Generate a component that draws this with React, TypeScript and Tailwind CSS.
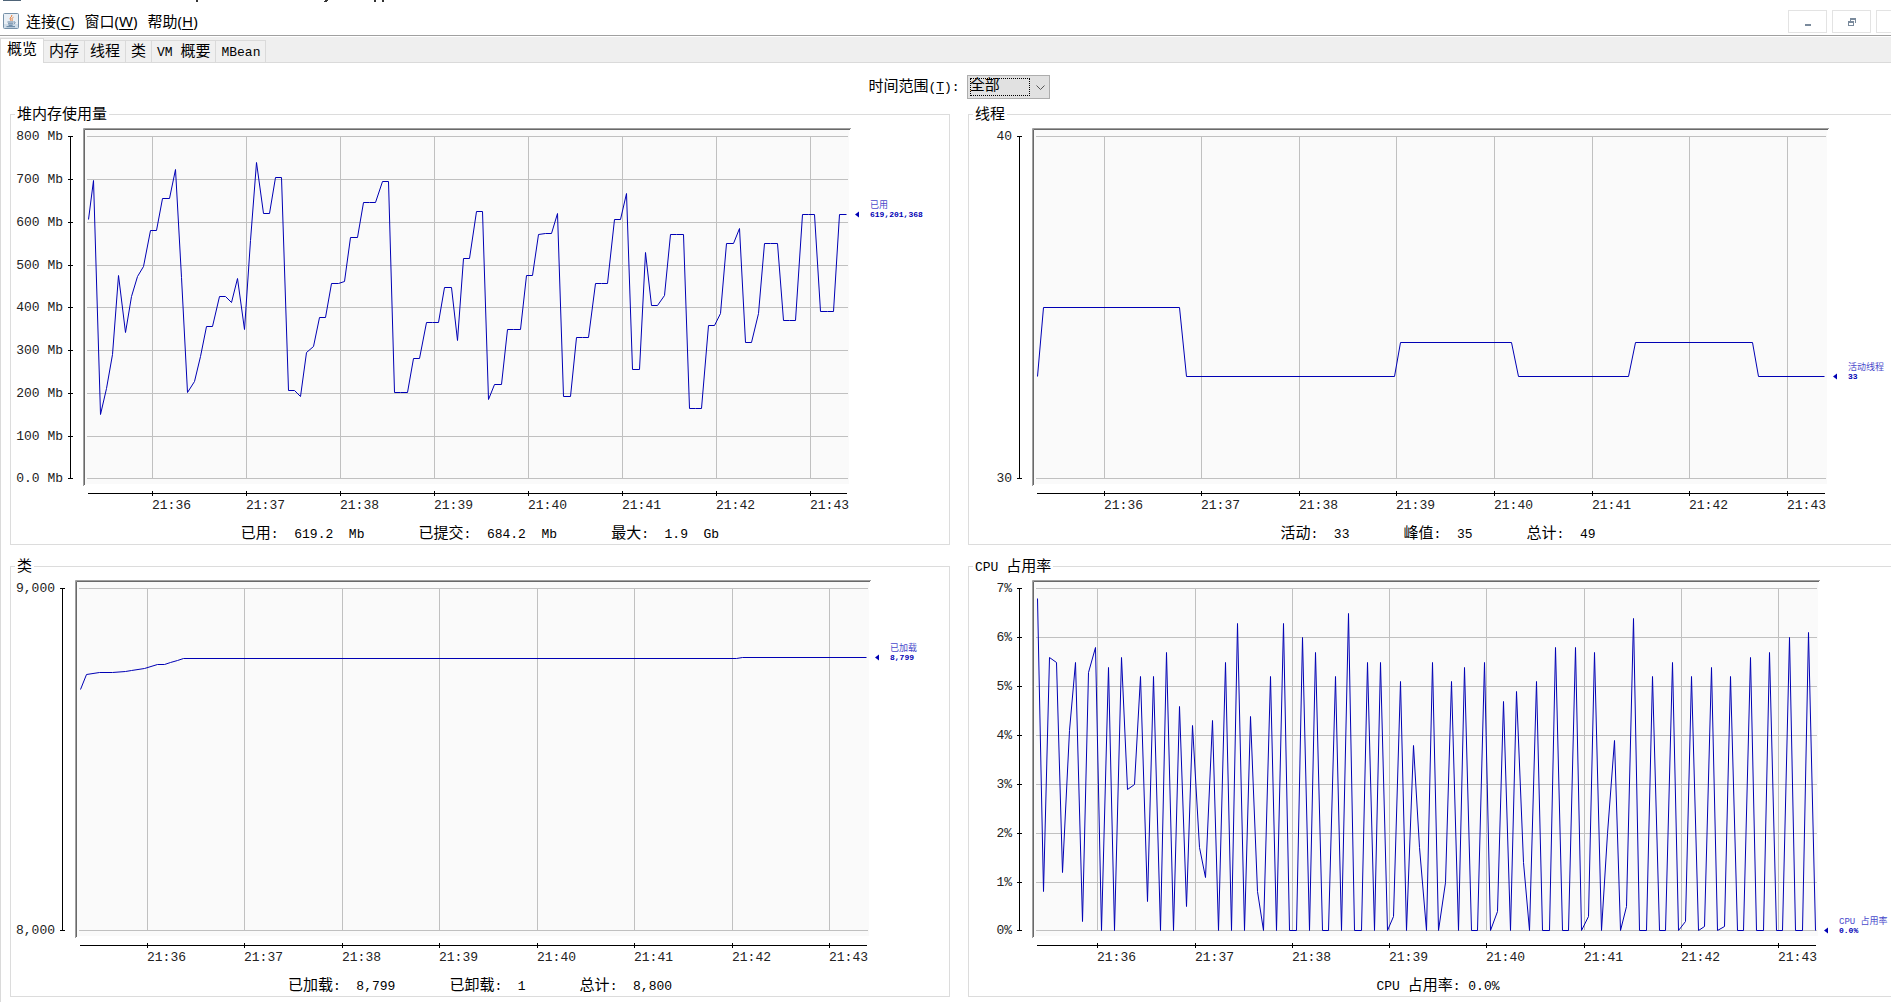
import { useLayoutEffect, useRef, useState } from "react";

type Point = [number, number];

type ChartProps = {
  min: number;
  max: number;
  ticks: { value: number; label: string }[];
  points: Point[];
  left: number;
  right: number;
  firstSample: number;
  firstMinute: number;
  duration: number;
  name: string;
  current: string;
};

const times = ["21:36", "21:37", "21:38", "21:39", "21:40", "21:41", "21:42", "21:43"];

const heap = [
  607, 699, 150, 211, 291, 475, 343, 428, 473, 496, 582, 582, 657, 657, 723, 472, 203, 227, 287, 356, 356,
  426, 426, 412, 470, 350, 557, 741, 622, 622, 706, 706, 206, 206, 194, 297, 309, 377, 377, 458, 458, 461,
  564, 564, 646, 646, 646, 695, 695, 203, 203, 203, 283, 283, 365, 365, 367, 447, 449, 325, 515, 515, 625,
  625, 187, 222, 222, 349, 349, 349, 475, 475, 573, 575, 575, 620, 194, 194, 332, 332, 332, 458, 458, 458,
  608, 608, 669, 255, 255, 529, 407, 407, 430, 573, 573, 573, 164, 165, 166, 360, 360, 388, 552, 552, 587,
  320, 320, 388, 552, 552, 552, 370, 370, 370, 618, 618, 618, 391, 391, 391, 618, 618,
];

const cpu = [
  6.8, 0.8, 5.6, 5.5, 1.2, 4.1, 5.5, 0.2, 5.3, 5.8, 0, 5.4, 0, 5.6, 2.9, 3, 5.2, 0.6, 5.2, 0, 5.7, 0, 4.6,
  0.5, 4.2, 1.7, 1.1, 4.3, 0, 5.5, 0, 6.3, 0, 4.4, 0.8, 0, 5.2, 0, 6.3, 0, 0, 6, 0, 5.7, 0, 0, 5.2, 0, 6.5,
  0, 0, 5.5, 0, 5.5, 0, 0.3, 5.1, 0, 3.8, 1.7, 0, 5.5, 0, 1, 5.1, 0, 5.4, 0, 0, 5.5, 0, 0.4, 4.7, 0, 4.9,
  1.4, 0, 5.1, 0, 0, 5.8, 0, 0, 5.8, 0, 0.3, 5.7, 0, 2, 3.9, 0, 0.5, 6.4, 0, 0, 5.2, 0, 0, 5.5, 0, 0.2,
  5.2, 0, 0.1, 5.4, 0, 0.1, 5.2, 0, 0, 5.6, 0, 0, 5.7, 0, 0, 6, 0, 0, 6.1, 0,
];

const threads: Point[] = [
  [0, 33], [1, 35], [22, 35], [23, 33], [55, 33], [56, 34], [73, 34],
  [74, 33], [91, 33], [92, 34], [110, 34], [111, 33], [121, 33],
];

const classes: Point[] = [
  [0, 8705], [1, 8751], [3, 8757], [5, 8757], [7, 8760], [8, 8762], [10, 8768], [12, 8778],
  [13, 8778], [14, 8786], [15, 8792], [16, 8796], [101, 8796], [102, 8799], [121, 8799],
];

const indexed = (values: number[]): Point[] => values.map((v, i) => [i, v]);

// ASCII runs use the narrower monospace size
const Text = ({ children }: { children: string }) => (
  <span className="whitespace-pre">
    {children.split(/([\x20-\x7e]+)/).map((part, i) =>
      i % 2 ? (
        <span key={i} className="text-[13px]">
          {part}
        </span>
      ) : (
        part
      )
    )}
  </span>
);

const TOP = 11;
const PLOT = 342;

const Chart = (p: ChartProps) => {
  const ref = useRef<HTMLDivElement>(null);
  const [width, setWidth] = useState(938);

  useLayoutEffect(() => {
    const el = ref.current;
    if (!el) return;
    const update = () => setWidth(el.clientWidth);
    update();
    const observer = new ResizeObserver(update);
    observer.observe(el);
    return () => observer.disconnect();
  }, []);

  const start = p.left + 5;
  const end = width - p.right;
  const axis = p.left - 13;
  const bottom = TOP + PLOT;
  const x = (sec: number) => Math.floor(start + ((end - start) * sec) / p.duration);
  const y = (v: number) => Math.ceil(bottom - (PLOT * (v - p.min)) / (p.max - p.min));
  const sec = (i: number) => (i === 0 ? 0 : p.firstSample + 4 * (i - 1));
  const line = p.points.map(([i, v]) => `${x(sec(i)) + 0.5},${y(v) + 0.5}`).join(" ");
  const lastY = y(p.points[p.points.length - 1][1]);

  return (
    <div ref={ref} className="h-[399px] w-full overflow-hidden">
      <svg width={width} height="399" className="block" role="img" aria-label={p.name}>
        <rect x={p.left + 2} y="5" width={end - p.left + 1} height="354" fill="#fafafa" />
        <path d={`M${p.left + 0.5} 361V3.5H${end + 5}`} fill="none" stroke="#a0a0a0" />
        <path d={`M${p.left + 1.5} 360V4.5H${end + 4}`} fill="none" stroke="#696969" />

        <g shapeRendering="crispEdges">
          {p.ticks.map((t) => (
            <g key={t.label}>
              <rect x={p.left + 4} y={y(t.value)} width={end - p.left - 2} height="1" fill="#c0c0c0" />
              <rect x={axis - 2} y={y(t.value)} width="5" height="1" />
            </g>
          ))}
          {times.map((t, i) => (
            <g key={t}>
              <rect x={x(p.firstMinute + i * 60)} y={TOP} width="1" height={PLOT} fill="#c0c0c0" />
              <rect x={x(p.firstMinute + i * 60)} y="366" width="1" height="5" />
            </g>
          ))}
          <rect x={axis} y={TOP} width="1" height={PLOT} />
          <rect x={start} y="368" width={end - start + 1} height="1" />
        </g>

        <g fontSize="13" fill="#222">
          {p.ticks.map((t) => (
            <text key={t.label} x={axis - 7} y={y(t.value) + 4} textAnchor="end">
              {t.label}
            </text>
          ))}
          {times.map((t, i) => (
            <text key={t} x={x(p.firstMinute + i * 60)} y="384">
              {t}
            </text>
          ))}
        </g>

        <polyline points={line} fill="none" stroke="#0000b4" strokeWidth="1" />
        <path d={`M${end + 9} ${lastY + 0.5}l4 -3v6z`} fill="#0000b4" />
        <text x={end + 24} y={lastY - 6} fontSize="9" fill="#4a4acb">
          {p.name}
        </text>
        <text x={end + 24} y={lastY + 3} fontSize="8" fontWeight="bold" fill="#0000b4">
          {p.current}
        </text>
      </svg>
    </div>
  );
};

const Panel = ({ title, stats, chart }: { title: string; stats: string[]; chart: ChartProps }) => (
  <fieldset className="min-w-0 border border-[#dcdcdc]">
    <legend className="ml-1 h-[21px] px-0.5 leading-[23px]">
      <Text>{title}</Text>
    </legend>
    <Chart {...chart} />
    <div className="flex h-5 justify-center gap-[54px] leading-[22px]">
      {stats.map((s) => (
        <Text key={s}>{s}</Text>
      ))}
    </div>
  </fieldset>
);

const JavaIcon = () => (
  <svg width="16" height="16" viewBox="0 0 16 16" fill="none">
    <rect x="0.5" y="0.5" width="15" height="15" rx="1" fill="#e9eff5" stroke="#7590a8" />
    <path d="M1 11h14v4H1z" fill="#cfdce8" />
    <path d="M8.8 2c.8 1.8-2.6 2.4-1.6 4.2.3.5.8.9.7 1.6M10.400 4.300c-1.600.8-1.800 1.500-1.200 2.300.3.500.1.900-.3 1.300" stroke="#e8772e" />
    <path d="M4.500 9h6M5 10.800h5.200M5.600 12.300h4M3.500 13.700h8.500M10.800 9c1.800-.4 1.800 1.400 0 1.900" stroke="#4f7394" strokeWidth="0.9" />
  </svg>
);

const menus = [
  { label: "连接", letter: "C" },
  { label: "窗口", letter: "W" },
  { label: "帮助", letter: "H" },
];

const MenuBar = () => (
  <header className="flex h-9 items-start border-b border-[#a0a0a0] pr-1">
    <div className="flex grow flex-col">
      <svg width="420" height="2" aria-hidden="true" className="mb-[9px] block">
        <path d="M3 0h18v1H3z" fill="#4f6478" />
        <path d="M196 0h2v2h-2zM325 0h3v1h-1v1h-3v-1h1zM374 0h2v2h-2zM382 0h2v2h-2z" fill="#333" />
      </svg>
      <nav className="flex h-5 items-center gap-[7px] pl-[3px] font-['Noto_Sans','Noto_Sans_CJK_SC',sans-serif]">
        <JavaIcon />
        <div className="flex gap-[10px]">
          {menus.map((m) => (
            <button key={m.letter} type="button" className="leading-5">
              {m.label}(<u className="underline-offset-2">{m.letter}</u>)
            </button>
          ))}
        </div>
      </nav>
    </div>
    <div className="mt-[10px] flex gap-[5px]">
      <button type="button" aria-label="最小化" className="flex h-[23px] w-[39px] items-center justify-center border border-[#e3e3e3]">
        <svg width="8" height="8" shapeRendering="crispEdges">
          <path d="M1 6h6v2H1z" fill="#7a8a9c" />
        </svg>
      </button>
      <button type="button" aria-label="还原" className="flex h-[23px] w-[39px] items-center justify-center border border-[#e3e3e3]">
        <svg width="8" height="8" shapeRendering="crispEdges">
          <path d="M2 0h6v5H7V2H3v1H2zM0 3h6v5H0zM1 5v2h4V5z" fillRule="evenodd" fill="#7a8a9c" />
        </svg>
      </button>
      <button type="button" aria-label="关闭" className="flex h-[23px] w-[39px] items-center justify-center border border-[#e3e3e3]">
        <svg width="8" height="8">
          <path d="M1 1l6 6M7 1l-6 6" stroke="#7a8a9c" strokeWidth="2" />
        </svg>
      </button>
    </div>
  </header>
);

const tabs = ["内存", "线程", "类", "VM 概要", "MBean"];

const Tabs = () => (
  <div role="tablist" className="mt-px flex h-[26px] items-end bg-[#efefef]">
    <button
      type="button"
      role="tab"
      aria-selected="true"
      className="flex h-[25px] w-11 items-start justify-center border-x border-t border-[#dadada] bg-white leading-[23px]"
    >
      <Text>概览</Text>
    </button>
    {tabs.map((t) => (
      <button
        key={t}
        type="button"
        role="tab"
        aria-selected="false"
        className="flex h-[23px] items-start border-y border-r border-[#dadada] bg-[#f0f0f0] px-[5px] leading-[23px]"
      >
        <Text>{t}</Text>
      </button>
    ))}
    <div className="grow self-stretch border-b border-[#dadada]"></div>
  </div>
);

const TimeRange = () => (
  <div className="flex h-[41px] items-start justify-center gap-[7px] pt-3">
    <label htmlFor="range" className="leading-[26px]">
      时间范围
      <span className="text-[13px]">
        (<u className="underline-offset-2">T</u>):
      </span>
    </label>
    <div className="relative">
      <select
        id="range"
        className="block h-6 w-[83px] appearance-none border border-[#adadad] bg-[#e1e1e1] pl-0.5 leading-[22px] outline-none"
      >
        <option>全部</option>
      </select>
      <span className="pointer-events-none absolute top-[3px] left-[3px] h-[18px] w-[60px] border border-dotted border-black"></span>
      <svg width="9" height="6" className="pointer-events-none absolute top-[10px] right-[5px]" fill="none">
        <path d="M0.500 0.500l4 4l4-4" stroke="#555" />
      </svg>
    </div>
  </div>
);

const range = (from: number, to: number, step: number, format: (v: number) => string) => {
  const list = [];
  for (let value = to; value >= from; value -= step) list.push({ value, label: format(value) });
  return list;
};

const App = () => {
  return (
    <div className="min-h-screen overflow-hidden bg-white text-[15px] text-black font-['Liberation_Mono','Noto_Sans_CJK_SC',monospace]">
      <div className="-mr-7">
        <MenuBar />
        <Tabs />
        <main className="border-l border-[#dadada] pr-[11px] pb-[5px] pl-[9px]">
          <TimeRange />
          <div className="grid grid-cols-2 gap-x-[18px] gap-y-[11px]">
            <Panel
              title="堆内存使用量"
              stats={["已用:  619.2  Mb", "已提交:  684.2  Mb", "最大:  1.9  Gb"]}
              chart={{
                min: 0,
                max: 800,
                ticks: range(0, 800, 100, (v) => (v ? `${v} Mb` : "0.0 Mb")),
                points: indexed(heap),
                left: 72,
                right: 103,
                firstSample: 3.7,
                firstMinute: 41,
                duration: 483.7,
                name: "已用",
                current: "619,201,368",
              }}
            />
            <Panel
              title="线程"
              stats={["活动:  33", "峰值:  35", "总计:  49"]}
              chart={{
                min: 30,
                max: 40,
                ticks: range(30, 40, 10, String),
                points: threads,
                left: 63,
                right: 83,
                firstSample: 3.7,
                firstMinute: 41.2,
                duration: 483.7,
                name: "活动线程",
                current: "33",
              }}
            />
            <Panel
              title="类"
              stats={["已加载:  8,799", "已卸载:  1", "总计:  8,800"]}
              chart={{
                min: 8000,
                max: 9000,
                ticks: range(8000, 9000, 1000, (v) => v.toLocaleString("en-US")),
                points: classes,
                left: 64,
                right: 83,
                firstSample: 3.7,
                firstMinute: 41.25,
                duration: 483.7,
                name: "已加载",
                current: "8,799",
              }}
            />
            <Panel
              title="CPU 占用率"
              stats={["CPU 占用率: 0.0%"]}
              chart={{
                min: 0,
                max: 7,
                ticks: range(0, 7, 1, (v) => `${v}%`),
                points: indexed(cpu),
                left: 63,
                right: 92,
                firstSample: 4,
                firstMinute: 37.5,
                duration: 480,
                name: "CPU 占用率",
                current: "0.0%",
              }}
            />
          </div>
        </main>
      </div>
    </div>
  );
};

export default App;
